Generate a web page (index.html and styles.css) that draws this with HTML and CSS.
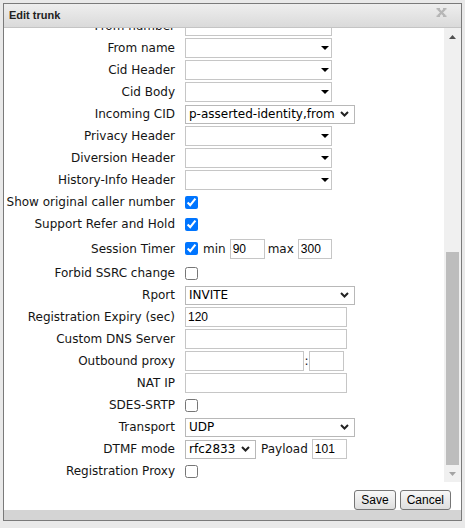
FILE: index.html
```html
<!DOCTYPE html>
<html lang="en">
<head>
<meta charset="utf-8">
<title>Edit trunk</title>
<link rel="stylesheet" href="styles.css">
</head>
<body>
<div class="dialog">
  <div class="titlebar">
    <span class="title">Edit trunk</span>
    <svg class="close" width="11" height="9" viewBox="0 0 11 9" aria-label="Close">
      <path d="M2 1L9 8M9 1L2 8" stroke="#b6b6b6" stroke-width="2.4" fill="none"/>
      <path d="M0.5 0.8H4M7 0.8H10.5M0.5 8.2H4M7 8.2H10.5" stroke="#b6b6b6" stroke-width="1.5" fill="none"/>
    </svg>
  </div>
  <div class="main">
    <div class="pane">
      <div class="form">
        <div class="row"><span class="lbl">From number</span><div class="field"><input class="txt w147" type="text"></div></div>
        <div class="row"><span class="lbl">From name</span><div class="field"><div class="dd"><svg width="8" height="4" viewBox="0 0 8 4"><path d="M0 0H8L4 4Z" fill="#000"/></svg></div></div></div>
        <div class="row"><span class="lbl">Cid Header</span><div class="field"><div class="dd"><svg width="8" height="4" viewBox="0 0 8 4"><path d="M0 0H8L4 4Z" fill="#000"/></svg></div></div></div>
        <div class="row"><span class="lbl">Cid Body</span><div class="field"><div class="dd"><svg width="8" height="4" viewBox="0 0 8 4"><path d="M0 0H8L4 4Z" fill="#000"/></svg></div></div></div>
        <div class="row"><span class="lbl">Incoming CID</span><div class="field"><div class="sel w170"><span>p-asserted-identity,from</span><svg width="9" height="6" viewBox="0 0 9 6"><path d="M1 1L4.5 4.5L8 1" stroke="#222" stroke-width="2" fill="none"/></svg></div></div></div>
        <div class="row"><span class="lbl">Privacy Header</span><div class="field"><div class="dd"><svg width="8" height="4" viewBox="0 0 8 4"><path d="M0 0H8L4 4Z" fill="#000"/></svg></div></div></div>
        <div class="row"><span class="lbl">Diversion Header</span><div class="field"><div class="dd"><svg width="8" height="4" viewBox="0 0 8 4"><path d="M0 0H8L4 4Z" fill="#000"/></svg></div></div></div>
        <div class="row"><span class="lbl">History-Info Header</span><div class="field"><div class="dd"><svg width="8" height="4" viewBox="0 0 8 4"><path d="M0 0H8L4 4Z" fill="#000"/></svg></div></div></div>
        <div class="row"><span class="lbl">Show original caller number</span><div class="field"><input class="chk" type="checkbox" checked></div></div>
        <div class="row"><span class="lbl">Support Refer and Hold</span><div class="field"><input class="chk" type="checkbox" checked></div></div>
        <div class="row tall"><span class="lbl">Session Timer</span><div class="field"><input class="chk" type="checkbox" checked><span class="inl first">min</span><input class="txt w35" type="text" value="90"><span class="inl">max</span><input class="txt w34" type="text" value="300"></div></div>
        <div class="row"><span class="lbl">Forbid SSRC change</span><div class="field"><input class="chk" type="checkbox"></div></div>
        <div class="row"><span class="lbl">Rport</span><div class="field"><div class="sel w170"><span>INVITE</span><svg width="9" height="6" viewBox="0 0 9 6"><path d="M1 1L4.5 4.5L8 1" stroke="#222" stroke-width="2" fill="none"/></svg></div></div></div>
        <div class="row"><span class="lbl">Registration Expiry (sec)</span><div class="field"><input class="txt w162" type="text" value="120"></div></div>
        <div class="row"><span class="lbl">Custom DNS Server</span><div class="field"><input class="txt w162" type="text"></div></div>
        <div class="row"><span class="lbl">Outbound proxy</span><div class="field"><input class="txt w119" type="text"><span class="colon">:</span><input class="txt w35" type="text"></div></div>
        <div class="row"><span class="lbl">NAT IP</span><div class="field"><input class="txt w162" type="text"></div></div>
        <div class="row"><span class="lbl">SDES-SRTP</span><div class="field"><input class="chk" type="checkbox"></div></div>
        <div class="row"><span class="lbl">Transport</span><div class="field"><div class="sel w170"><span>UDP</span><svg width="9" height="6" viewBox="0 0 9 6"><path d="M1 1L4.5 4.5L8 1" stroke="#222" stroke-width="2" fill="none"/></svg></div></div></div>
        <div class="row"><span class="lbl">DTMF mode</span><div class="field"><div class="sel w71"><span>rfc2833</span><svg width="9" height="6" viewBox="0 0 9 6"><path d="M1 1L4.5 4.5L8 1" stroke="#222" stroke-width="2" fill="none"/></svg></div><span class="inl payload">Payload</span><input class="txt w35" type="text" value="101"></div></div>
        <div class="row"><span class="lbl">Registration Proxy</span><div class="field"><input class="chk" type="checkbox"></div></div>
      </div>
    </div>
    <div class="scrollbar">
      <div class="sb-btn"><svg width="7" height="4" viewBox="0 0 7 4"><path d="M0 4H7L3.5 0Z" fill="#505050"/></svg></div>
      <div class="sb-track"><div class="sb-thumb"></div></div>
      <div class="sb-btn"><svg width="7" height="4" viewBox="0 0 7 4"><path d="M0 0H7L3.5 4Z" fill="#a3a3a3"/></svg></div>
    </div>
  </div>
  <div class="buttons">
    <button class="btn" type="button">Save</button>
    <button class="btn" type="button">Cancel</button>
  </div>
  <div class="statusbar"></div>
</div>
</body>
</html>
```
FILE: styles.css
```css
* { box-sizing: border-box; }
html, body { margin: 0; padding: 0; }
body {
  background: #e9e9e9;
  height: 528px;
  overflow: hidden;
  font-family: "DejaVu Sans", Verdana, sans-serif;
  font-size: 12px;
  color: #141414;
}
.dialog {
  margin: 3px 0 0 3px;
  width: 459px;
  height: 518px;
  border: 1px solid #7a7a7a;
  background: #fff;
  display: flex;
  flex-direction: column;
}
.titlebar {
  flex: none;
  height: 24px;
  border-bottom: 1px solid #c4c4c4;
  background: linear-gradient(#eeeeee, #dadada);
  display: flex;
  justify-content: space-between;
  align-items: center;
  padding: 0 14px 1px 5px;
}
.title {
  font-family: "Liberation Sans", Arial, sans-serif;
  font-weight: bold;
  font-size: 11px;
  color: #222;
}
.close { align-self: flex-start; margin-top: 4px; }
.main { flex: none; height: 454px; display: flex; }
.pane {
  flex: 1;
  overflow: hidden;
  display: flex;
  flex-direction: column;
  justify-content: flex-end;
}
.form { flex: none; }
.row {
  height: 22px;
  display: grid;
  grid-template-columns: 171px 1fr;
  column-gap: 10px;
  align-items: center;
}
.row.tall { height: 27px; }
.lbl { text-align: right; white-space: nowrap; }
.field { display: flex; align-items: center; }
.txt {
  height: 20px;
  margin: 0;
  border: 1px solid #c6c6c6;
  border-radius: 0;
  padding: 0 2px;
  font-family: "Liberation Sans", Arial, sans-serif;
  font-size: 12px;
  color: #000;
  background: #fff;
  outline: none;
}
.w147 { width: 147px; }
.w162 { width: 162px; }
.w119 { width: 119px; }
.w35 { width: 35px; }
.w34 { width: 34px; }
.w170 { width: 170px; }
.w71 { width: 71px; }
.dd {
  width: 147px;
  height: 20px;
  border: 1px solid #c6c6c6;
  display: flex;
  justify-content: flex-end;
  align-items: center;
  padding-right: 2px;
}
.sel {
  height: 19px;
  border: 1px solid #b8b8b8;
  display: flex;
  justify-content: space-between;
  align-items: center;
  padding: 0 5px 0 3px;
  white-space: nowrap;
  color: #000;
}
.chk { margin: 0; width: 13px; height: 13px; }
.inl { margin: 0 4px 0 3px; }
.inl.first { margin-left: 5px; }
.inl.payload { margin: 0 4px 0 5px; }
.colon { width: 5px; text-align: center; }
.scrollbar {
  flex: none;
  width: 17px;
  background: #f0f0f0;
  display: flex;
  flex-direction: column;
}
.sb-btn {
  flex: none;
  height: 17px;
  display: flex;
  align-items: center;
  justify-content: center;
}
.sb-track {
  flex: 1;
  display: flex;
  flex-direction: column;
  justify-content: flex-end;
  padding: 0 2px;
}
.sb-thumb { height: 213px; background: #bdbdbd; }
.buttons {
  flex: none;
  height: 28px;
  display: flex;
  justify-content: flex-end;
  align-items: flex-start;
  gap: 4px;
  padding: 8px 10px 0 0;
}
.btn {
  height: 20px;
  margin: 0;
  padding: 0 6px;
  border: 1px solid #767676;
  border-radius: 3px;
  background: linear-gradient(#f8f8f8, #dedede);
  font-family: "Liberation Sans", Arial, sans-serif;
  font-size: 12px;
  color: #000;
}
.statusbar { flex: none; height: 10px; background: #d4d4d4; }
```
